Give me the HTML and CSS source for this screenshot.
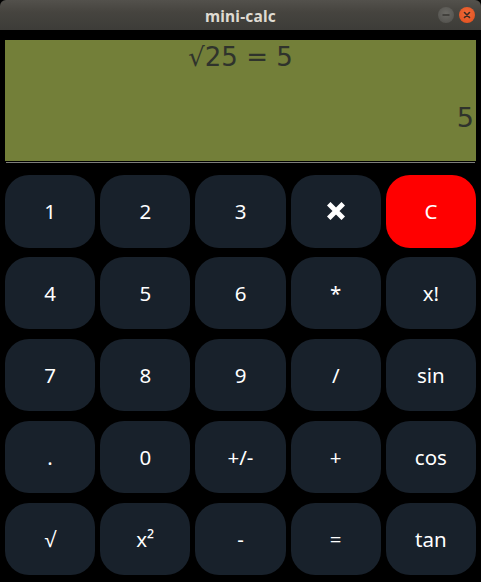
FILE: index.html
```html
<!DOCTYPE html>
<html>
<head>
<meta charset="utf-8">
<title>mini-calc</title>
<link rel="stylesheet" href="styles.css">
</head>
<body>
<div class="window">
  <header class="titlebar">
    <span class="title">mini-calc</span>
    <div class="wm-buttons">
      <span class="wm-btn wm-min"><svg width="16" height="16" viewBox="0 0 16 16"><line x1="4.5" y1="8" x2="11.5" y2="8" stroke="#3a3935" stroke-width="1.6"/></svg></span>
      <span class="wm-btn wm-close"><svg width="16" height="16" viewBox="0 0 16 16"><path d="M5.5 5.5 L10.5 10.5 M10.5 5.5 L5.5 10.5" stroke="#3a2a22" stroke-width="1.6" stroke-linecap="round"/></svg></span>
    </div>
  </header>
  <main class="calc">
    <section class="display">
      <div class="expr">√25 = 5</div>
      <div class="result">5</div>
    </section>
    <div class="rule"></div>
    <section class="keys">
      <button class="key">1</button>
      <button class="key">2</button>
      <button class="key">3</button>
      <button class="key key-back"><svg width="18" height="18" viewBox="0 0 18 18"><path d="M3.5 3.5 L14.5 14.5 M14.5 3.5 L3.5 14.5" stroke="#fff" stroke-width="5" stroke-linecap="square"/></svg></button>
      <button class="key key-clear">C</button>

      <button class="key">4</button>
      <button class="key">5</button>
      <button class="key">6</button>
      <button class="key">*</button>
      <button class="key">x!</button>

      <button class="key">7</button>
      <button class="key">8</button>
      <button class="key">9</button>
      <button class="key">/</button>
      <button class="key">sin</button>

      <button class="key">.</button>
      <button class="key">0</button>
      <button class="key">+/-</button>
      <button class="key">+</button>
      <button class="key">cos</button>

      <button class="key">√</button>
      <button class="key">x²</button>
      <button class="key">-</button>
      <button class="key">=</button>
      <button class="key">tan</button>
    </section>
  </main>
</div>
</body>
</html>
```
FILE: styles.css
```css
html, body {
  margin: 0;
  padding: 0;
  background: #000;
}
.window {
  width: 481px;
  height: 582px;
  background: #000;
  overflow: hidden;
}
.titlebar {
  height: 30px;
  position: relative;
  display: flex;
  align-items: center;
  justify-content: center;
  background: linear-gradient(to bottom, #53514c 0%, #46443f 40%, #3d3c38 100%);
  border-radius: 6px 6px 0 0;
}
.title {
  font-family: "Noto Sans", "DejaVu Sans", sans-serif;
  font-weight: bold;
  font-size: 15.5px;
  color: #dfdbd2;
  letter-spacing: 0.2px;
  margin-top: 1px;
}
.wm-buttons {
  position: absolute;
  right: 6px;
  top: 7px;
  display: flex;
  gap: 5px;
}
.wm-btn {
  width: 16px;
  height: 16px;
  border-radius: 50%;
  display: flex;
}
.wm-min {
  background: radial-gradient(circle at 50% 40%, #6a6964, #4f4e4a);
  border: 0 solid #333;
}
.wm-close {
  background: radial-gradient(circle at 50% 40%, #f06a3a, #df4d1b);
}
.calc {
  padding: 10px 5px 0 5px;
}
.display {
  height: 121px;
  background: #737f39;
  position: relative;
  font-family: "DejaVu Sans", sans-serif;
  color: #2f332c;
  box-sizing: border-box;
  padding: 2px 2px 0 0;
}
.expr {
  text-align: center;
  font-size: 26px;
  line-height: 30px;
  padding-left: 2px;
}
.result {
  text-align: right;
  font-size: 27px;
  line-height: 30px;
  margin-top: 31px;
}
.rule {
  height: 1px;
  background: #7d7d7a;
  margin: 1px 1px 0 1px;
}
.keys {
  margin-top: 12px;
  display: grid;
  grid-template-columns: repeat(5, 1fr);
  grid-auto-rows: 72.5px;
  column-gap: 5px;
  row-gap: 9.4px;
}
.key {
  border: none;
  margin: 0;
  padding: 0;
  background: #18212b;
  color: #fff;
  border-radius: 24px;
  font-family: "Noto Sans", "Open Sans", sans-serif;
  font-size: 20.5px;
  display: flex;
  align-items: center;
  justify-content: center;
}
.key-clear {
  background: #ff0000;
}
.key-back svg {
  display: block;
}
```
